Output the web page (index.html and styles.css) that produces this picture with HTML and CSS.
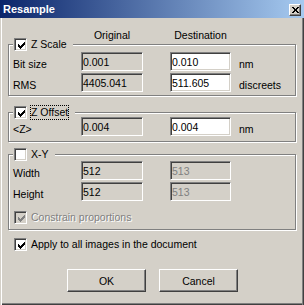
FILE: index.html
```html
<!DOCTYPE html>
<html>
<head>
  <title>Resample</title>
  <link rel="stylesheet" href="styles.css">
</head>
<body>
  <div class="window">
    <div class="titlebar">
      <span class="title">Resample</span>
      <span class="close-btn">
        <svg width="7" height="6" viewBox="0 0 7 6"><path d="M0 0h2v1H0z M5 0h2v1H5z M1 1h2v1H1z M4 1h2v1H4z M2 2h3v2H2z M1 4h2v1H1z M4 4h2v1H4z M0 5h2v1H0z M5 5h2v1H5z" fill="#000"/></svg>
      </span>
    </div>

    <div class="client">
      <div class="col-heads">
        <span class="col-orig">Original</span>
        <span class="col-dest">Destination</span>
      </div>

      <div class="group group-zscale">
        <div class="group-title">
          <span class="check"><svg viewBox="0 0 11 11"><path d="M3 5h1v3H3z M4 6h1v3H4z M5 7h1v3H5z M6 6h1v3H6z M7 5h1v3H7z M8 4h1v3H8z M9 3h1v3H9z"/></svg></span>
          <span class="check-label">Z Scale</span>
        </div>
        <div class="row row-first">
          <span class="row-label">Bit size</span>
          <input class="edit edit-orig" type="text" value="0.001" readonly>
          <input class="edit edit-dest" type="text" value="0.010">
          <span class="unit">nm</span>
        </div>
        <div class="row">
          <span class="row-label">RMS</span>
          <input class="edit edit-orig" type="text" value="4405.041" readonly>
          <input class="edit edit-dest" type="text" value="511.605">
          <span class="unit">discreets</span>
        </div>
      </div>

      <div class="group group-zoffset">
        <div class="group-title">
          <span class="check"><svg viewBox="0 0 11 11"><path d="M3 5h1v3H3z M4 6h1v3H4z M5 7h1v3H5z M6 6h1v3H6z M7 5h1v3H7z M8 4h1v3H8z M9 3h1v3H9z"/></svg></span>
          <span class="check-label focus">Z Offset</span>
        </div>
        <div class="row row-up">
          <span class="row-label">&lt;Z&gt;</span>
          <input class="edit edit-orig" type="text" value="0.004" readonly>
          <input class="edit edit-dest" type="text" value="0.004">
          <span class="unit">nm</span>
        </div>
      </div>

      <div class="group group-xy">
        <div class="group-title">
          <span class="check"></span>
          <span class="check-label">X-Y</span>
        </div>
        <div class="row row-flush">
          <span class="row-label">Width</span>
          <input class="edit edit-orig" type="text" value="512" readonly>
          <input class="edit edit-dest" type="text" value="513" disabled>
        </div>
        <div class="row">
          <span class="row-label">Height</span>
          <input class="edit edit-orig" type="text" value="512" readonly>
          <input class="edit edit-dest" type="text" value="513" disabled>
        </div>
        <div class="check-row constrain">
          <span class="check disabled"><svg viewBox="0 0 11 11"><path d="M3 5h1v3H3z M4 6h1v3H4z M5 7h1v3H5z M6 6h1v3H6z M7 5h1v3H7z M8 4h1v3H8z M9 3h1v3H9z"/></svg></span>
          <span class="check-label grayed">Constrain proportions</span>
        </div>
      </div>

      <div class="check-row apply">
        <span class="check"><svg viewBox="0 0 11 11"><path d="M3 5h1v3H3z M4 6h1v3H4z M5 7h1v3H5z M6 6h1v3H6z M7 5h1v3H7z M8 4h1v3H8z M9 3h1v3H9z"/></svg></span>
        <span class="check-label">Apply to all images in the document</span>
      </div>

      <div class="buttons">
        <button class="btn">OK</button>
        <button class="btn">Cancel</button>
      </div>
    </div>
  </div>
</body>
</html>
```

FILE: styles.css
```css
* {
  margin: 0;
  padding: 0;
  box-sizing: border-box;
}

body {
  font-family: 'Liberation Sans', Arial, sans-serif;
  font-size: 10.5px;
  color: #000;
  background: #d4d0c8;
}

.window {
  width: 304px;
  height: 305px;
  background: #d4d0c8;
  box-shadow: inset 1px 0 0 #d4d0c8, inset 2px 0 0 #fff,
              inset -1px 0 0 #404040, inset -2px 0 0 #808080,
              inset 0 -1px 0 #404040, inset 0 -2px 0 #808080;
}

/* Title bar */
.titlebar {
  height: 18px;
  display: flex;
  align-items: center;
  justify-content: space-between;
  padding: 0 3px;
  background: linear-gradient(90deg, #0a246a, #a6caf0);
}

.title {
  color: #fff;
  font-weight: bold;
  font-size: 11px;
  line-height: 13px;
  padding-top: 1px;
}

.close-btn {
  width: 12px;
  height: 12px;
  margin-top: 2px;
  display: flex;
  align-items: center;
  justify-content: center;
  background: #d4d0c8;
  border: 1px solid;
  border-color: #fff #404040 #404040 #fff;
  box-shadow: inset -1px -1px 0 #808080;
}

.close-btn svg {
  display: block;
}

/* Dialog body */
.client {
  padding: 11px 8px 0;
}

.col-heads {
  display: flex;
  height: 13px;
  line-height: 13px;
  padding-left: 73px;
}

.col-orig {
  width: 62px;
  text-align: center;
}

.col-dest {
  width: 61px;
  margin-left: 27px;
  text-align: center;
}

.group {
  border: 1px solid #808080;
  box-shadow: inset 1px 1px 0 #fff, 1px 1px 0 #fff;
  padding: 0 4px 5px;
}

.group-zscale {
  margin-top: 2px;
  padding-bottom: 3px;
}

.group-zoffset {
  margin-top: 16px;
}

.group-xy {
  margin-top: 12px;
}

.group-title {
  display: flex;
  align-items: center;
  width: fit-content;
  height: 13px;
  margin-top: -7px;
  padding: 0 6px 0 1px;
  background: #d4d0c8;
  line-height: 13px;
}

.check {
  display: block;
  width: 13px;
  height: 13px;
  flex-shrink: 0;
  background: #fff;
  border: 1px solid;
  border-color: #808080 #fff #fff #808080;
  box-shadow: inset 1px 1px 0 #404040, inset -1px -1px 0 #d4d0c8;
}

.check svg {
  display: block;
  width: 11px;
  height: 11px;
  fill: #000;
}

.check.disabled {
  background: #d4d0c8;
}

.check.disabled svg {
  fill: #808080;
}

.check-label {
  margin-left: 4px;
  line-height: 13px;
  white-space: nowrap;
}

.check-label.focus {
  margin-left: 3px;
  padding: 1px;
  outline: 1px dotted #000;
  outline-offset: -1px;
}

.check-label.grayed {
  color: #808080;
  text-shadow: 1px 1px 0 #fff;
}

/* Value rows */
.row {
  display: flex;
  height: 19px;
  margin-top: 2px;
}

.row-first {
  margin-top: 1px;
}

.row-up {
  margin-top: -2px;
}

.row-flush {
  margin-top: 0;
}

.row-label {
  width: 68px;
  padding-top: 6px;
  line-height: 13px;
  white-space: nowrap;
}

.edit {
  font: inherit;
  color: #000;
  height: 19px;
  padding: 0 1px;
  background: #fff;
  border: 1px solid;
  border-color: #808080 #fff #fff #808080;
  box-shadow: inset 1px 1px 0 #404040, inset -1px -1px 0 #d4d0c8;
  outline: none;
}

.edit-orig {
  width: 62px;
  background: #d4d0c8;
}

.edit-dest {
  width: 61px;
  margin-left: 27px;
}

.edit:disabled {
  background: #d4d0c8;
  color: #808080;
  -webkit-text-fill-color: #808080;
  opacity: 1;
}

.unit {
  margin-left: 8px;
  padding-top: 6px;
  line-height: 13px;
}

.check-row {
  display: flex;
  align-items: center;
  height: 13px;
}

.constrain {
  margin: 10px 0 0 1px;
}

.apply {
  margin: 8px 0 0 6px;
}

/* Buttons */
.buttons {
  display: flex;
  justify-content: center;
  gap: 13px;
  margin-top: 18px;
  padding-left: 1px;
}

.btn {
  width: 79px;
  height: 23px;
  font: inherit;
  color: #000;
  background: #d4d0c8;
  border: 1px solid;
  border-color: #fff #404040 #404040 #fff;
  box-shadow: inset -1px -1px 0 #808080;
}
```
